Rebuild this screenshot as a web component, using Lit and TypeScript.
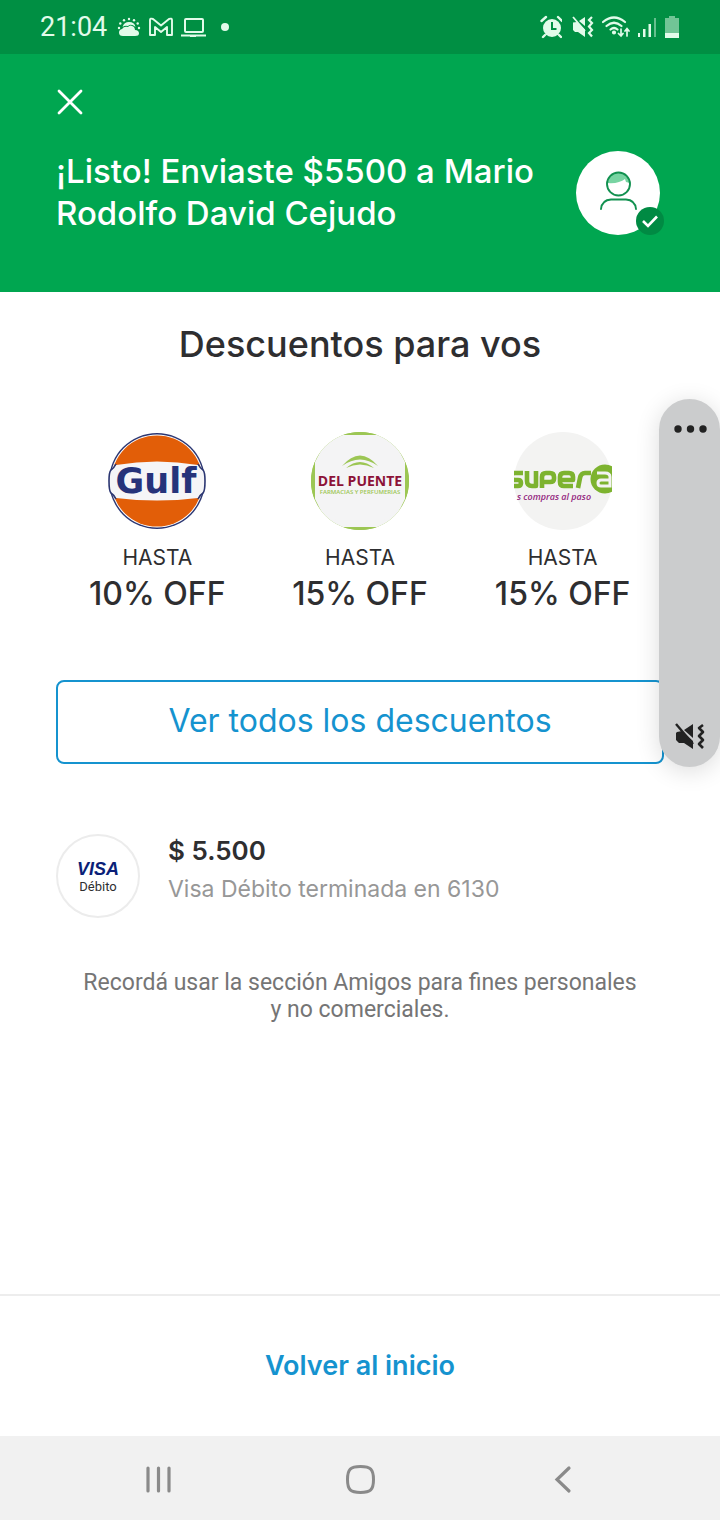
import { LitElement, html, css, svg } from "lit";
import { customElement } from "lit/decorators.js";

const offers = [
  { name: "Gulf", value: "10% OFF" },
  { name: "Del Puente", value: "15% OFF" },
  { name: "Super A", value: "15% OFF" },
];

const gulfLogo = svg`
  <circle cx="49" cy="49" r="48" fill="#2b3672"/>
  <circle cx="49" cy="49" r="46.6" fill="#fff"/>
  <circle cx="49" cy="49" r="45.6" fill="#e25e08"/>
  <path d="M8 33Q49 26 90 33Q92 36 95 38Q97 40 97 49Q97 60 95 61Q92 63 90 66Q49 71 8 66Q6 63 3 61Q1 59 1 49Q1 40 3 38Q6 36 8 33Z" fill="#f5f5f7"/>
  <path d="M8 32Q6 36 3 38Q1 40 1 49Q1 59 3 61Q6 63 8 67M90 32Q92 36 95 38Q97 40 97 49Q97 59 95 61Q92 63 90 67" fill="none" stroke="#2b3672" stroke-width="1.6"/>
  <text x="48" y="61" text-anchor="middle" font-family="DejaVu Sans, sans-serif" font-weight="700" font-size="35" fill="#26337a">Gulf</text>`;

const puenteLogo = svg`
  <clipPath id="puente-clip"><circle cx="49" cy="49" r="49"/></clipPath>
  <g clip-path="url(#puente-clip)">
    <rect width="98" height="98" fill="#9cc654"/>
    <path d="M18 3H80L94 30V67L80 95H18L4 67V30Z" fill="#f4f4f5"/>
    <circle cx="49" cy="49" r="46" fill="#f4f4f5"/>
    <path d="M0 30H4V67H0ZM94 30H98V67H94ZM32 0H66V3H32ZM32 95H66V98H32Z" fill="#9cc654"/>
  </g>
  <path d="M31 34Q49 13 67 34Q49 21 31 34Z" fill="#9cc654"/>
  <path d="M35 36Q49 24 63 36Q49 29 35 36Z" fill="#9cc654"/>
  <text x="49" y="54" text-anchor="middle" font-family="Open Sans, sans-serif" font-weight="700" font-size="14" fill="#8c1238">DEL PUENTE</text>
  <text x="49" y="62" text-anchor="middle" font-family="Open Sans, sans-serif" font-weight="600" font-size="6" fill="#9cc654">FARMACIAS Y PERFUMERIAS</text>`;

const superLogo = svg`
  <clipPath id="super-clip"><rect y="0" width="98" height="98"/></clipPath>
  <circle cx="49" cy="49" r="49" fill="#f3f3f2"/>
  <g clip-path="url(#super-clip)">
    <circle cx="91" cy="47" r="14.500" fill="#7db32f"/>
    <g fill="none" stroke="#7db32f" stroke-width="4.6" stroke-linejoin="round">
      <path d="M9 41H1Q-3 41-3 44.500Q-3 48 1 48H4Q7 48 7 51Q7 54 4 54H-3"/>
      <path d="M13 39V49Q13 54 18 54H22V39"/>
      <path d="M28 56V45Q28 41 32 41H36Q40 41 40 45V47Q40 50 36 50H28"/>
      <path d="M46 48H59V45Q59 41 55 41H50Q46 41 46 45V50Q46 54 50 54H59"/>
      <path d="M64 56L66 46Q67 41 71 41H77"/>
    </g>
    <path d="M83 41H91Q96 41 96 45V54H87Q84 54 84 51Q84 48 87 48H96" fill="none" stroke="#f3f3f2" stroke-width="3"/>
  </g>
  <text x="40" y="68" text-anchor="middle" font-family="Open Sans, sans-serif" font-style="italic" font-weight="600" font-size="9" fill="#93277f">s compras al paso</text>`;

const logos = [gulfLogo, puenteLogo, superLogo];

@customElement("app-root")
export class AppRoot extends LitElement {
  static styles = css`
    :host {
      position: relative;
      display: flex;
      flex-direction: column;
      min-height: 100vh;
      background: #fff;
      color: #2e2e30;
      font-family: Inter, sans-serif;
    }
    * { box-sizing: border-box; }
    svg { display: block; flex: none; }
    h1, h2, p { margin: 0; font-weight: 400; }
    button {
      border: 0;
      padding: 0;
      background: none;
      color: inherit;
      font: inherit;
      cursor: pointer;
    }
    .status {
      display: flex;
      align-items: center;
      justify-content: space-between;
      height: 54px;
      padding: 0 40px;
      background: #008f43;
      color: #e2fbea;
      font: 400 27px/32px Roboto, sans-serif;
    }
    .status-side { display: flex; align-items: center; gap: 8px; }
    .header {
      padding: 32px 56px 54px;
      background: #00a650;
      color: #fff;
    }
    .close { display: block; }
    .summary {
      display: flex;
      align-items: flex-start;
      justify-content: space-between;
      margin-top: 32px;
    }
    .summary h1 { font-size: 33px; font-weight: 500; line-height: 42px; }
    .main {
      flex: 1;
      display: flex;
      flex-direction: column;
      padding: 28px 56px;
    }
    .title { text-align: center; font-size: 36px; font-weight: 500; line-height: 48px; }
    .offers {
      display: grid;
      grid-template-columns: repeat(3, 1fr);
      margin: 64px 0 0;
      padding: 0;
      list-style: none;
    }
    .offer { display: flex; flex-direction: column; align-items: center; }
    .offer-label { margin-top: 12px; font-size: 21px; line-height: 32px; }
    .offer-value { font-size: 32px; font-weight: 500; line-height: 40px; }
    .all {
      height: 84px;
      margin-top: 66px;
      padding-bottom: 4px;
      border: 2px solid #1593cf;
      border-radius: 8px;
      color: #1593cf;
      font-size: 32px;
    }
    .payment { display: flex; align-items: flex-start; gap: 28px; margin-top: 70px; }
    .card-badge {
      display: flex;
      flex-direction: column;
      align-items: center;
      justify-content: center;
      width: 84px;
      height: 84px;
      border: 2px solid #ececec;
      border-radius: 50%;
      font: 400 13px/14px Roboto, sans-serif;
    }
    .visa { color: #0b1f78; font: italic 700 18px/21px "Liberation Sans", sans-serif; }
    .amount { font-size: 26px; font-weight: 600; line-height: 34px; }
    .card { color: #979797; font-size: 23px; line-height: 42px; }
    .note {
      margin-top: 51px;
      padding: 0 20px;
      color: #757575;
      text-align: center;
      font: 400 23px/27px Roboto, sans-serif;
    }
    .footer {
      display: flex;
      align-items: center;
      justify-content: center;
      height: 142px;
      padding-bottom: 2px;
      border-top: 2px solid #ededed;
    }
    .home { color: #1593cf; font-size: 27px; font-weight: 600; text-decoration: none; }
    .nav {
      display: grid;
      grid-template-columns: repeat(3, 1fr);
      align-items: center;
      justify-items: center;
      height: 84px;
      padding: 0 56px;
      background: #f1f1f1;
    }
    .volume {
      position: absolute;
      top: 399px;
      right: 0;
      display: flex;
      flex-direction: column;
      align-items: center;
      justify-content: space-between;
      width: 61px;
      height: 368px;
      padding: 24px 0 14px;
      border-radius: 31px;
      background: #cbcccd;
      box-shadow: 0 4px 24px rgba(0, 0, 0, 0.14);
    }
  `;

  render() {
    return html`
      <div class="status">
        <div class="status-side">
          <span>21:04</span>
          <svg width="26" height="24" viewBox="-2 0 26 24" fill="currentColor">
            <path d="M6 21Q2 21 2 17.500Q2 14.500 5 14Q7 11 11 12Q13 9 17 12Q18 14 18 15Q22 15 22 18.500Q22 21 18 21Z"/>
            <path d="M5.500 12Q7 7 12 7Q17.500 7 18.500 12Q14 8 11 11Q8 10 5.500 12Z"/>
            <circle cx="12" cy="4" r="1.200"/><circle cx="7" cy="5.200" r="1.200"/><circle cx="17" cy="5.200" r="1.200"/><circle cx="3.300" cy="8.500" r="1.200"/><circle cx="20.700" cy="8.500" r="1.200"/><circle cx="2" cy="13" r="1.200"/><circle cx="22" cy="13" r="1.200"/>
          </svg>
          <svg width="24" height="24" viewBox="0 0 24 24" fill="none" stroke="currentColor" stroke-width="1.900" stroke-linejoin="round">
            <path d="M1 5Q1 3 4 4L12 10.500L20 4Q23 3 23 5V20H18V12L12 17L6 12V20H1Z"/>
          </svg>
          <svg width="26" height="24" viewBox="0 0 26 24" fill="none" stroke="currentColor" stroke-width="2">
            <rect x="4" y="4" width="18" height="13" rx="1"/><path d="M0 20.500H25M9 21H15"/>
          </svg>
          <svg width="20" height="24" viewBox="0 0 20 24" fill="currentColor"><circle cx="10" cy="12" r="4"/></svg>
        </div>
        <div class="status-side">
          <svg width="24" height="24" viewBox="-1 0 24 24">
            <circle cx="13" cy="13" r="9" fill="currentColor"/>
            <path d="M2.500 6L7 2M23 6L19 2M6 20L4 22M20 20L22 22" stroke="currentColor" stroke-width="2.400" stroke-linecap="round"/>
            <path d="M13 7V14H17.500" fill="none" stroke="#008f43" stroke-width="2"/>
          </svg>
          <svg width="24" height="24" viewBox="-2 0 24 24" fill="currentColor">
            <path d="M1 7.500L5 7L13 14.500V22L6 17H3L1 15ZM7 6L13 2V11Z"/>
            <path d="M1 2L13 16" stroke="currentColor" stroke-width="1.800"/>
            <path d="M20 2L17 5L20 8L17 11.500L20 15L17 18L20 21.500" fill="none" stroke="currentColor" stroke-width="2.200"/>
          </svg>
          <svg width="28" height="24" viewBox="0 0 28 24" fill="none" stroke="currentColor" stroke-width="2.200" stroke-linecap="round">
            <path d="M1 7Q12-2 23 7M4.500 11Q12 4.500 19.500 11M8.500 14.500Q12 11.500 15.500 14.500"/>
            <circle cx="12" cy="17.500" r="1" fill="currentColor"/>
            <path d="M19 14V21M16.500 18.500L19 21L21 18.500M25 21V14M23 16L25 13.500L27 16" stroke-width="1.700"/>
          </svg>
          <svg width="18" height="24" viewBox="0 0 18 24" fill="currentColor">
            <path d="M0 18H2V22H0ZM5 14H7.500V22H5ZM10.500 9H13V22H10.500Z"/><path d="M16 3H18V22H16Z" opacity=".45"/>
          </svg>
          <svg width="16" height="24" viewBox="0 0 16 24" fill="currentColor">
            <path d="M5 1H11V3H15V19H1V3H5Z" opacity=".5"/><path d="M1 18H15V23H1Z"/>
          </svg>
        </div>
      </div>

      <header class="header">
        <button class="close" aria-label="Cerrar">
          <svg width="32" height="32" viewBox="0 0 32 32" fill="none" stroke="currentColor" stroke-width="2.800" stroke-linecap="round">
            <path d="M3 5L25 27M25 5L3 27"/>
          </svg>
        </button>
        <div class="summary">
          <h1>¡Listo! Enviaste $5500 a Mario<br />Rodolfo David Cejudo</h1>
          <svg width="88" height="88" viewBox="0 0 88 88">
            <circle cx="42" cy="43" r="42" fill="#fff"/>
            <path d="M31 33Q33 23 43 23Q52 24 54 33L50 32L49 29Q43 34 31 33Z" fill="#78d4a2"/>
            <g fill="none" stroke="#129150" stroke-width="1.900" stroke-linecap="round">
              <circle cx="42.500" cy="34" r="11.500"/>
              <path d="M25 59Q26 50 35 49.500H50Q59 50 60 59"/>
            </g>
            <circle cx="74" cy="71" r="14" fill="#008a43"/>
            <path d="M67 71L72 76L81 66.500" fill="none" stroke="#fff" stroke-width="2.600"/>
          </svg>
        </div>
      </header>

      <main class="main">
        <h2 class="title">Descuentos para vos</h2>
        <ul class="offers">
          ${offers.map((offer, i) => html`
            <li class="offer">
              <svg width="98" height="98" viewBox="0 0 98 98" role="img" aria-label=${offer.name}>${logos[i]}</svg>
              <span class="offer-label">HASTA</span>
              <span class="offer-value">${offer.value}</span>
            </li>`)}
        </ul>
        <button class="all">Ver todos los descuentos</button>
        <div class="payment">
          <div class="card-badge"><span class="visa">VISA</span><span>Débito</span></div>
          <div>
            <p class="amount">$ 5.500</p>
            <p class="card">Visa Débito terminada en 6130</p>
          </div>
        </div>
        <p class="note">Recordá usar la sección Amigos para fines personales y no comerciales.</p>
      </main>

      <footer class="footer"><a class="home" href="#">Volver al inicio</a></footer>

      <nav class="nav">
        <button aria-label="Recientes">
          <svg width="32" height="32" viewBox="0 0 32 32" stroke="#8a8a8a" stroke-width="3.200" stroke-linecap="round"><path d="M7 6V29M17.500 6V29M28 6V29"/></svg>
        </button>
        <button aria-label="Inicio">
          <svg width="32" height="32" viewBox="0 0 32 32" fill="none" stroke="#8a8a8a" stroke-width="3"><path d="M16.500 4.500C26.500 4.500 29.500 7 29.500 17.500S26.500 30.500 16.500 30.500S3.500 28 3.500 17.500S6.500 4.500 16.500 4.500Z"/></svg>
        </button>
        <button aria-label="Atrás">
          <svg width="32" height="32" viewBox="0 0 32 32" fill="none" stroke="#8a8a8a" stroke-width="3.200" stroke-linecap="round"><path d="M22 6L10 17.500L22 29"/></svg>
        </button>
      </nav>

      <aside class="volume">
        <button aria-label="Más opciones">
          <svg width="34" height="12" viewBox="0 0 34 12" fill="#222"><circle cx="5" cy="6" r="3.700"/><circle cx="17.500" cy="6" r="3.700"/><circle cx="30" cy="6" r="3.700"/></svg>
        </button>
        <button aria-label="Vibrar">
          <svg width="32" height="34" viewBox="0 0 32 34" fill="#222">
            <path d="M3 13L8 12L19 22V30L10 24H5L2 21V14ZM10 11L19 5V19Z"/>
            <path d="M2 5L19 25" stroke="#222" stroke-width="2.400"/>
            <path d="M29 6L25 9L29 13L25 17L29 21L25 25L29 29" fill="none" stroke="#222" stroke-width="2.600" stroke-linejoin="round"/>
          </svg>
        </button>
      </aside>
    `;
  }
}
